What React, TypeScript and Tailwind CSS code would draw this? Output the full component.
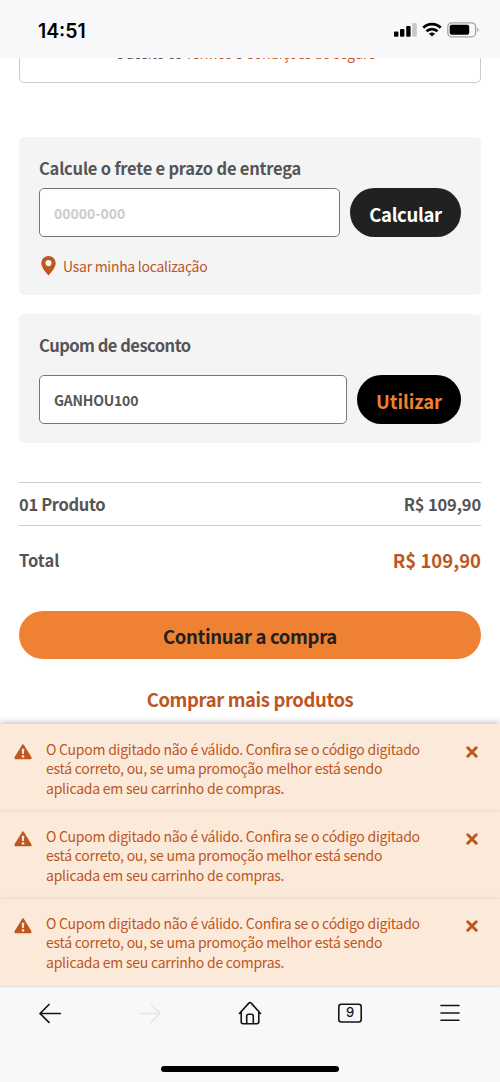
import type { ReactNode } from "react";

const MESSAGE = [
  "O Cupom digitado não é válido. Confira se o código digitado",
  "está correto, ou, se uma promoção melhor está sendo",
  "aplicada em seu carrinho de compras.",
];

function StatusBar() {
  return (
    <header className="flex h-[58px] shrink-0 items-start justify-between bg-[#f8f8fb] pr-[21px] pl-[38px]">
      <span className="pt-[19px] font-['Inter',sans-serif] text-[19.4px] leading-[24px] font-semibold text-black">14:51</span>
      <div className="flex items-center pt-[22px]">
        <svg width="23" height="16" viewBox="0 0 23 16">
          <rect x="0" y="9.5" width="4.4" height="5.3" rx="1" />
          <rect x="6" y="7" width="4.4" height="7.8" rx="1" />
          <rect x="12.2" y="4" width="4.4" height="10.8" rx="1" />
          <rect x="18.2" y="1" width="4.6" height="13.8" rx="1" fill="#c7c7ca" />
        </svg>
        <svg className="ml-[5px]" width="20" height="16" viewBox="0 0 20 16" fill="none" stroke="#000" strokeWidth="2.7">
          <path d="M1.3 5.8C6.2.9 13.8.9 18.7 5.8" />
          <path d="M4.5 9.2C7.6 6.3 12.4 6.3 15.5 9.2" />
          <path d="M10 14.6 7 11.7C8.7 10.2 11.3 10.2 13 11.7Z" fill="#000" stroke="none" />
        </svg>
        <svg className="ml-[5px]" width="32" height="16" viewBox="0 0 32 16">
          <rect x="0.8" y="0.8" width="27.8" height="14" rx="4" fill="none" stroke="#a4a4a8" strokeWidth="1.3" />
          <rect x="2.7" y="2.8" width="19.5" height="10" rx="2" />
          <path d="M30.2 5.5C32 6.3 32 9.3 30.2 10Z" fill="#a4a4a8" />
        </svg>
      </div>
    </header>
  );
}

function Panel({ className, children }: { className: string; children: ReactNode }) {
  return <section className={`rounded-[5px] bg-[#f4f4f4] px-[20px] ${className}`}>{children}</section>;
}

function Toast({ first }: { first?: boolean }) {
  return (
    <div
      className={`flex items-start bg-[#fbead9] pl-[14px] text-[#bd561f] ${
        first ? "h-[88px] pt-[16px] shadow-[0_0_8px_rgba(0,0,0,0.35)]" : "h-[87px] pt-[15px] shadow-[0_0_4px_rgba(0,0,0,0.1)]"
      }`}
    >
      <svg className="mt-[4px] shrink-0" width="18" height="16" viewBox="0 0 18 16">
        <path d="M7.9 1.2Q9 -.5 10.1 1.2L17.3 13.1Q18.1 15.1 16.3 15.3H1.7Q-.1 15.1.7 13.1Z" fill="currentColor" />
        <path d="M7.7 4.8H10.3L9.9 10H8.1ZM7.8 11.3H10.2V13.5H7.8Z" fill="#fbead9" />
      </svg>
      <p className="ml-[14px] w-[400px] text-[14px] leading-[19.4px] tracking-[-0.24px] whitespace-nowrap">
        {MESSAGE.map((line) => (
          <span key={line} className="block">{line}</span>
        ))}
      </p>
      <svg className="mt-[6px] ml-[20px]" width="12" height="12" viewBox="0 0 12 12" fill="none" stroke="currentColor" strokeWidth="3" strokeLinecap="round">
        <path d="M1.8 1.8 10.2 10.2M10.2 1.8 1.8 10.2" />
      </svg>
    </div>
  );
}

function Toolbar() {
  return (
    <nav className="flex h-[96px] shrink-0 flex-col items-center justify-between border-t border-[#ebebea] bg-[#f8f8fb]">
      <div className="grid h-[51px] w-full grid-cols-5 place-items-center text-[#161618]">
        <svg width="24" height="22" viewBox="0 0 24 22" fill="none" stroke="currentColor" strokeWidth="1.7" strokeLinecap="round" strokeLinejoin="round">
          <path d="M22.3 11.5H2M11 2.5 2 11.5 11 20.3" />
        </svg>
        <svg width="24" height="22" viewBox="0 0 24 22" fill="none" stroke="#e7e7e9" strokeWidth="1.7" strokeLinecap="round" strokeLinejoin="round">
          <path d="M1.7 11.5H22M13 2.5 22 11.5 13 20.3" />
        </svg>
        <svg width="24" height="24" viewBox="0 0 24 24" fill="none" stroke="currentColor" strokeWidth="1.6" strokeLinecap="round" strokeLinejoin="round">
          <path d="M1.5 12.5 10.8 2.1Q12 .9 13.2 2.1L22.5 12.5M3.2 10.7V20.8Q3.2 22.7 5.1 22.7H18.9Q20.8 22.7 20.8 20.8V10.7M8.7 22.5V15.3Q8.7 13.3 10.7 13.3H13.3Q15.3 13.3 15.3 15.3V22.5" />
        </svg>
        <span className="relative flex h-[20px] w-[24px] items-center justify-center font-['Inter',sans-serif] text-[13px] leading-none font-medium">
          <svg className="absolute inset-0" width="24" height="20" viewBox="0 0 24 20" fill="none" stroke="currentColor" strokeWidth="1.6">
            <rect x="0.8" y="1.2" width="22.4" height="17.8" rx="2.5" />
          </svg>
          9
        </span>
        <svg width="20" height="18" viewBox="0 0 20 18" stroke="currentColor" strokeWidth="1.6" strokeLinecap="round">
          <path d="M1 1.5H19M1 9H19M1 16.3H19" />
        </svg>
      </div>
      <span className="mb-[10px] h-[6px] w-[178px] rounded-full bg-black" />
    </nav>
  );
}

export default function App() {
  return (
    <div className="flex h-[1082px] w-[500px] flex-col overflow-hidden bg-white font-['Noto_Sans_CJK_SC','Noto_Sans',sans-serif] text-[#555]">
      <StatusBar />
      <main className="flex h-[666px] shrink-0 flex-col overflow-hidden px-[19px]">
        <div className="flex h-[25px] shrink-0 items-end justify-center rounded-b-[5px] border-[1.5px] border-t-0 border-[#ccc]">
          <p className="mr-[8px] mb-[19px] text-[14px] leading-[20px] tracking-[-0.25px] whitespace-nowrap">
            e aceito os <span className="text-[#bd561f]">Termos</span> e <span className="text-[#bd561f]">Condições do seguro</span>
          </p>
        </div>

        <Panel className="mt-[54px] h-[158px] shrink-0 pt-[19px]">
          <h2 className="text-[16.5px] leading-[24px] font-bold tracking-[-0.22px] whitespace-nowrap">Calcule o frete e prazo de entrega</h2>
          <div className="mt-[8px] flex gap-[10px]">
            <div className="flex h-[49px] flex-1 items-center rounded-[5px] border-[1.5px] border-[#777] bg-white pt-[1px] pl-[14px] text-[14px] font-bold text-[#ccc]">00000-000</div>
            <button className="h-[49px] w-[111px] rounded-full bg-[#212121] pt-[2px] text-[18.5px] leading-[24px] font-bold tracking-[-0.35px] text-white">Calcular</button>
          </div>
          <a className="mt-[19px] flex items-center text-[14px] leading-[20px] tracking-[-0.28px] text-[#bd561f]">
            <svg className="ml-[2px]" width="15" height="20" viewBox="0 0 15 20">
              <path d="M7.5 0A7.2 7.2 0 0 0 .3 7.2C.3 11.5 5 16.5 7.5 19.5 10 16.5 14.7 11.5 14.7 7.2A7.2 7.2 0 0 0 7.5 0ZM7.5 4A3.1 3.1 0 1 1 7.5 10.2 3.1 3.1 0 0 1 7.5 4Z" fill="currentColor" fillRule="evenodd" />
            </svg>
            <span className="ml-[7px] whitespace-nowrap">Usar minha localização</span>
          </a>
        </Panel>

        <Panel className="mt-[19px] h-[129px] shrink-0 pt-[19px]">
          <h2 className="text-[16.5px] leading-[24px] font-bold tracking-[-0.5px] whitespace-nowrap">Cupom de desconto</h2>
          <div className="mt-[18px] flex gap-[10px]">
            <div className="flex h-[49px] flex-1 items-center rounded-[5px] border-[1.5px] border-[#777] bg-white pt-[2px] pl-[14px] text-[14px] font-bold tracking-[-0.2px]">GANHOU100</div>
            <button className="h-[49px] w-[104px] rounded-full bg-black pt-[3px] text-[18.5px] leading-[24px] font-bold tracking-[-0.1px] text-[#ef8232]">Utilizar</button>
          </div>
        </Panel>

        <div className="mt-[39px] flex h-[44px] shrink-0 items-center justify-between border-y border-[#ccc] text-[16.5px] leading-[24px] font-bold">
          <span className="tracking-[-0.35px]">01 Produto</span>
          <span className="tracking-[-0.16px]">R$ 109,90</span>
        </div>
        <div className="mt-[21px] flex h-[26px] shrink-0 items-center justify-between text-[16.5px] leading-[24px] font-bold">
          <span className="pb-[1px]">Total</span>
          <span className="text-[18.5px] text-[#bd561f]">R$ 109,90</span>
        </div>
        <button className="mt-[38px] h-[48px] shrink-0 rounded-full bg-[#ef8232] pt-[2px] text-[18.5px] leading-[24px] font-bold tracking-[-0.33px] text-[#212121]">Continuar a compra</button>
        <a className="mt-[27px] text-center text-[18.5px] leading-[26px] font-bold tracking-[-0.4px] text-[#bd561f]">Comprar mais produtos</a>
      </main>
      <div className="relative flex h-[262px] shrink-0 flex-col">
        <Toast first />
        <Toast />
        <Toast />
      </div>
      <Toolbar />
    </div>
  );
}
